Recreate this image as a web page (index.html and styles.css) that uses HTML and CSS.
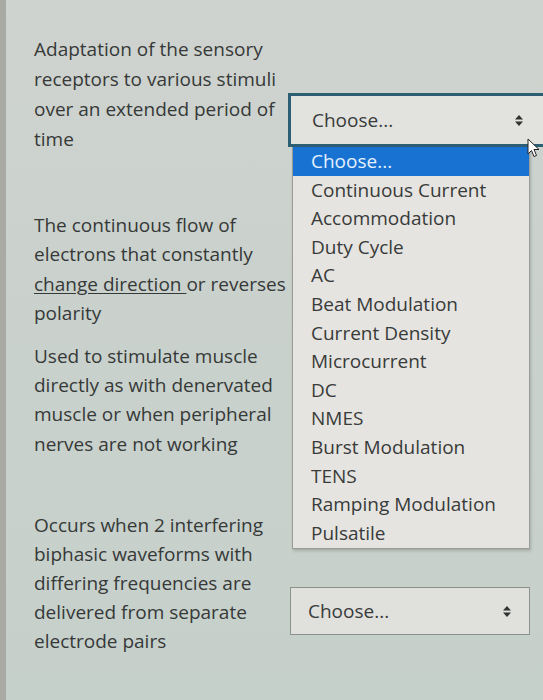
FILE: index.html
```html
<!DOCTYPE html>
<html>
<head>
<meta charset="utf-8">
<link rel="stylesheet" href="styles.css">
</head>
<body>
<div class="page">
  <div class="row row1">
    <div class="q">Adaptation of the sensory receptors to various stimuli over an extended period of time</div>
    <div class="ans ans1">
      <div class="select focused">
        <span>Choose...</span>
        <svg class="arrows" width="8" height="13" viewBox="0 0 8 13"><path d="M0 5.5 L4 1 L8 5.5 Z M0 7.5 L4 12 L8 7.5 Z" fill="#2f3331"/></svg>
      </div>
      <ul class="list">
        <li class="hl">Choose...</li>
        <li>Continuous Current</li>
        <li>Accommodation</li>
        <li>Duty Cycle</li>
        <li>AC</li>
        <li>Beat Modulation</li>
        <li>Current Density</li>
        <li>Microcurrent</li>
        <li>DC</li>
        <li>NMES</li>
        <li>Burst Modulation</li>
        <li>TENS</li>
        <li>Ramping Modulation</li>
        <li>Pulsatile</li>
      </ul>
      <svg class="cursor" width="14" height="20" viewBox="0 0 14 20"><path d="M1 1 L1 16 L4.5 12.5 L7 18.5 L9.5 17.5 L7 11.5 L12 11.5 Z" fill="#ffffff" stroke="#222" stroke-width="1"/></svg>
    </div>
  </div>
  <div class="row row2">
    <div class="q">The continuous flow of electrons that constantly <span class="u">change direction </span>or reverses polarity</div>
  </div>
  <div class="row row3">
    <div class="q">Used to stimulate muscle directly as with denervated muscle or when peripheral nerves are not working</div>
  </div>
  <div class="row row4">
    <div class="q">Occurs when 2 interfering biphasic waveforms with differing frequencies are delivered from separate electrode pairs</div>
    <div class="ans ans4">
      <div class="select plain">
        <span>Choose...</span>
        <svg class="arrows" width="8" height="13" viewBox="0 0 8 13"><path d="M0 5.5 L4 1 L8 5.5 Z M0 7.5 L4 12 L8 7.5 Z" fill="#2f3331"/></svg>
      </div>
    </div>
  </div>
</div>
</body>
</html>
```

FILE: styles.css
```css
html, body {
  margin: 0;
  padding: 0;
}
body {
  width: 543px;
  height: 700px;
  overflow: hidden;
  background: #cbd2cd;
  font-family: "Open Sans", "Noto Sans", sans-serif;
  color: #363938;
}
.page {
  height: 700px;
  border-left: 6px solid #a8aaa3;
  background: linear-gradient(180deg, #cfd3cf 0%, #c9d1cc 50%, #c6d0cb 100%);
  box-sizing: border-box;
}
.row {
  display: flex;
  align-items: flex-start;
}
.q {
  width: 254px;
  padding-left: 28px;
  font-size: 19px;
  line-height: 29.4px;
  flex: none;
  box-sizing: content-box;
}
.row1 .q { line-height: 30px; }
.row4 .q { line-height: 29px; }
.row1 { padding-top: 34px; }
.row2 { margin-top: 57px; }
.row3 { margin-top: 13px; }
.row4 { margin-top: 52px; }
.u {
  text-decoration: underline;
  text-underline-offset: 2px;
  text-decoration-thickness: 1px;
}
.ans {
  position: relative;
  flex: none;
}
.ans1 {
  margin-left: 0px;
  margin-top: 59px;
}
.ans4 {
  margin-left: 2px;
  margin-top: 76px;
}
.select {
  box-sizing: border-box;
  display: flex;
  align-items: center;
  justify-content: space-between;
  font-size: 19px;
  color: #383b3a;
}
.select.focused {
  width: 260px;
  height: 54px;
  border: 3px solid #2c5e74;
  background: #e2e2de;
  padding: 0 22px 0 21px;
}
.select.plain {
  width: 240px;
  height: 48px;
  border: 1px solid #8d918e;
  background: #e0e1dd;
  padding: 0 18px 0 17px;
}
.arrows {
  display: block;
}
.list {
  position: absolute;
  left: 4px;
  top: 54px;
  width: 236px;
  margin: 0;
  padding: 0 0 1px 0;
  list-style: none;
  background: #e6e4e0;
  border: 1px solid #9a9c98;
  border-top: none;
  box-shadow: 1px 2px 3px rgba(0,0,0,0.18);
  font-size: 19px;
}
.list li {
  height: 28.6px;
  line-height: 28.6px;
  padding-left: 18px;
  color: #383b3a;
  white-space: nowrap;
}
.list li.hl {
  background: #1872d2;
  color: #e4f1ff;
}
.cursor {
  position: absolute;
  left: 239px;
  top: 45px;
}
```
